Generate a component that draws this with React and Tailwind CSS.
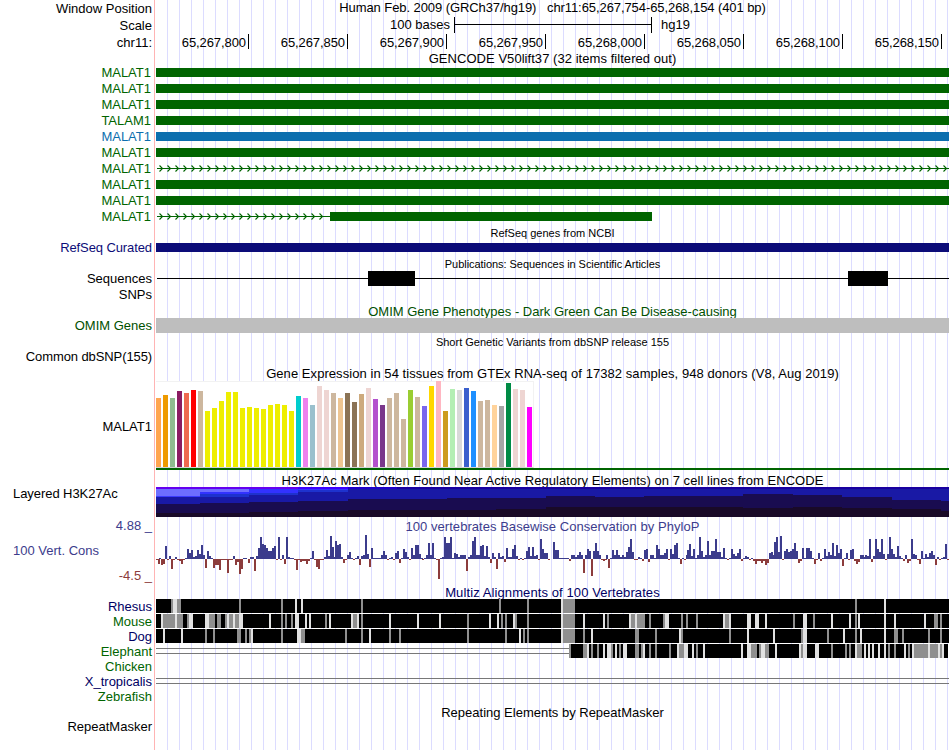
import React from 'react';
import clsx from 'clsx';

const GREEN = '#006400';

// bar height and colour for each of the 54 tissues
const tissues = [
  [69, '#ffa54f'], [72, '#ee9a00'], [69, '#8fbc8f'], [76, '#8b1c62'], [74, '#ee6a50'], [77, '#ff0000'],
  [76, '#cdb79e'], [56, '#eeee00'], [59, '#eeee00'], [66, '#eeee00'], [75, '#eeee00'], [75, '#eeee00'],
  [59, '#eeee00'], [60, '#eeee00'], [59, '#eeee00'], [58, '#eeee00'], [62, '#eeee00'], [63, '#eeee00'],
  [62, '#eeee00'], [56, '#eeee00'], [71, '#00cdcd'], [69, '#ee82ee'], [62, '#9ac0cd'], [81, '#eed5d2'],
  [77, '#eed5d2'], [74, '#cdb79e'], [69, '#eec591'], [74, '#8b7355'], [65, '#8b7355'], [73, '#cdaa7d'],
  [79, '#eed5d2'], [68, '#b452cd'], [62, '#7a378b'], [69, '#cdb79e'], [74, '#cdb79e'], [48, '#cdb79e'],
  [77, '#9acd32'], [70, '#cdb79e'], [61, '#7a67ee'], [81, '#ffd700'], [86, '#ffb6c1'], [56, '#cd9b1d'],
  [78, '#b4eeb4'], [77, '#d9d9d9'], [79, '#3a5fcd'], [76, '#1e90ff'], [66, '#cdb79e'], [67, '#cdb79e'],
  [62, '#ffd39b'], [61, '#a6a6a6'], [84, '#008b45'], [78, '#eed5d2'], [77, '#eed5d2'], [60, '#ff00ff'],
];

// runs of scores, two pixels per base, starting at x
const phyloP = [
  { x: 0, v: [-1] },
  { x: 2, v: [-5] },
  { x: 3, v: [1, -6, -5, 13, -1, 3, -10, -1, 2, -1, -2, -5, -1, 1, 10, 6, 9, 2, 3, 9, 5, 14, 4, -9, 8, 3, 1, -9, -6, -6, -11, -1, -1, -1, -14, -1, -1, 3, -6, -3, -15, -10, 1, 1] },
  { x: 92, v: [-4, 2, 2, -12, 3, 11, 22, 15, 14, 11, 8, 8, 11, 13, -1, 22, -1, 4, -5, 22, 2, 1, 1, -1, -11, -1, -3, -2, -2, -5, -2, 1, 8, -1, -8, -10, -1, -1, 2, 9, 3, 23, 12] },
  { x: 178, v: [2] },
  { x: 179, v: [18, 14, 15, 2, -4, -1, 4, 7] },
  { x: 195, v: [1, -1, 1, 3, -6, 3, 4, 24, 5, -8, 11, 1, 1, 1, 1, 4, 8, 4, -1, 1, 2, -1, 6, 8, -4, 1, 10, 7, 2, -1, 11, 4, 14, 14, 5, 1] },
  { x: 266, v: [-1, 1, 4, 16, 4, 16, 1, -1, -20, 1, 2, 22, 16, 16, 22, 1, 6, 5, 2, 4, 4, 4, -12, 2, 4, 18, 22, 4, 4, 13, 14, 3, 13, 2, -4, 6, 2, -10, 6, 2, 3, -3, 11, 2, 2, 10, 14, 3, -1, 1, -1, 1, 8, 12] },
  { x: 374, v: [3, 12, 3, 4, -1, 20, 10, 6, 6, -1] },
  { x: 397, v: [17, 9, 9, 1, 1, 1, 1, 1, -2, 4, 4, 2, 4, 7, 4, -14, 4, 10, 8, -17, 8, 16, 8] },
  { x: 443, v: [4, -1, -2] },
  { x: 449, v: [-1] },
  { x: 450, v: [4, -9, 1, 9, 4, 9, 4, 2, 4, 2, 7, 12, 20, 7, -1, -1, 2, 1, -2, 9, 10, -3, 4, 4, 1, 14, 10, 4, 4, 6, 10, -1, 10, 5, 14, 16, 1, -5, 1, -1, 4] },
  { x: 531, v: [9, 15, 3, 10, 1, 4, 22, 8, 2, 4, 18, 4, 8, 8, 20, 7, 7, 2, 11, 1, -1, 1, 10, 5, 3, 6, 10, -2, 1, 3, 2, -1, 1, -2, -5, -2, -2, -4, -2, -6, -4, 6] },
  { x: 615, v: [7] },
  { x: 616, v: [4] },
  { x: 618, v: [17, 22, 7, 23, -1, 8, 10, 7, 8, 10, 16, 8, -4, -2, 11, 1, 11, 11, 8, 1, -5, -1, 6, -2, 1, 10, 3, 7, 4, 16, 3, 14, 6, 10, -7, 1, 6, -1, 9, 10, -2, -5, -3, 4, 4] },
  { x: 708, v: [2] },
  { x: 709, v: [4, 3, 20, -3, 3, 20, 10, 7, 20, 5, -1, 5, 22, 10, 5, 2, 13, 3, 1, -2, 4, -4, -2, 20, 5, 4, -1, -5, 8, 1, 5, 2, 6, 8, 4, -6, 2, -1, 1, 2, 15, -1] },
];

// [x, last layer top, dark layer top] for each ChIP-seq window
const h3k27ac = [
  [0, 26, 17], [44, 26, 16], [93, 25, 15], [142, 24, 14], [192, 23, 12], [241, 23, 12], [291, 23, 11],
  [340, 22, 11], [390, 20, 9], [439, 20, 10], [488, 20, 9], [587, 21, 7], [637, 20, 8], [686, 21, 10],
  [736, 22, 13], [785, 24, 14], [793, 30, 30],
];

// x, y, width, height, fill
const h3k27acPeaks = [
  [0, 0, 192, 2, '#6400f0'],
  [142, 0, 50, 2, '#3c00ff'],
  [192, 0, 49, 2, '#1e00c8'],
  [241, 0, 552, 2, '#1900a0'],
  [0, 2, 44, 7, '#6e6eff'],
  [0, 9, 44, 1, '#3c3cff'],
  [44, 2, 49, 3, '#6e6eff'],
  [44, 5, 49, 2, '#3232ff'],
  [44, 7, 49, 3, '#1e32cd'],
  [93, 2, 49, 4, '#3232ff'],
  [93, 6, 49, 2, '#1e32cd'],
  [142, 2, 50, 1, '#3232ff'],
  [142, 3, 50, 2, '#1e32cd'],
];

// mismatching bases: g = grey, l = light, then x and optional width (default 2)
const species = [
  {
    name: 'Rhesus', color: 'text-[#000064]', start: 0,
    gaps: 'g15 l17:4 g21:4 g83 g125 l139 l145 g205 g343 g371 l405 g407:12 g699 l728',
  },
  {
    name: 'Mouse', color: 'text-[#006400]', start: 0,
    gaps: 'l5 g7:12 l19 g21:6 g31 l33:4 l49:4 g53:6 g61:4 g69 l71 g73:4 l77 g79:4 l83:4 l113 g125 g129 g135 l139:4 l149 l153 g169 l173 l195 g197:4 l201 g205 l233 l261 l283 g311 l333 l341 g345 g349 l357 g359 g371 l405 g407:12 l427 l447 g451 l473 g475:4 l479 g481:8 g493 g507 l509:4 g525 g530 g540 l567 g569:4 l573 l591:4 l599:4 l609 g637 l647:4 g657 l675 l693 g699 l702 l728 l738 l768 g778:4 g784',
  },
  {
    name: 'Dog', color: 'text-[#000064]', start: 0,
    gaps: 'l7 l25 g49 g57 g81:4 g89 g93 l95 g125 l141:4 g145:4 g189 g205 l213 g233 g243 g311 g349 l363 g367 g371 l405 g407:12 g427 l435 g479:4 g499 l523 g525 g573 l591 l617 g645 l647:4 g671 l687 g699 l704 l728 g738:4 g746 g772 g784',
  },
  {
    name: 'Elephant', color: 'text-[#006400]', start: 413,
    gaps: 'g413 g427:4 l431 g435 g441 l447 l451:4 g455 l459 g463 l467 l469 g479:4 g485 l487 g493 g499 g513 l521 g523:5 l528:4 l536 g540 l547 l585 l591:4 g595:6 g603 l605:4 g609:4 l619 l643 g645 l647:4 l659:4 g675 g689 g693 l699 g701:5 l708 l712 l716 l722 l728 g732 g738 l748 g752 l756 g758:14 l772 g774:8 l782 g784 l786',
  },
  { name: 'Chicken', color: 'text-[#006400]' },
  { name: 'X_tropicalis', color: 'text-[#000064]', start: 793 },
  { name: 'Zebrafish', color: 'text-[#006400]' },
];

const genes = [
  { name: 'MALAT1' },
  { name: 'MALAT1' },
  { name: 'MALAT1' },
  { name: 'TALAM1' },
  { name: 'MALAT1', coding: true },
  { name: 'MALAT1' },
  { name: 'MALAT1', intron: 793 },
  { name: 'MALAT1' },
  { name: 'MALAT1' },
  { name: 'MALAT1', intron: 174, exon: 322 },
];

const ticks = ['65,267,800', '65,267,850', '65,267,900', '65,267,950', '65,268,000', '65,268,050', '65,268,100', '65,268,150'];

const Row = ({ label, labelClass, className, children }) => (
  <div className={clsx('flex', className)}>
    <div className={clsx('w-[154px] shrink-0 pr-[2px] text-right', labelClass)}>{label}</div>
    <div className="shrink-0 border-l border-[#ffb4b4] pl-px">
      <div className="h-full w-[793px] bg-[linear-gradient(to_right,transparent_11px,#dcdcff_11px)] bg-[length:12px_100%]">
        {children}
      </div>
    </div>
  </div>
);

const Title = ({ small, className, height = 'h-[15px]', children }) => (
  <Row className={height}>
    <div className={clsx('text-center', small && 'pt-px text-[11px]', className)}>{children}</div>
  </Row>
);

const Chart = ({ width = 793, height, children }) => (
  <svg className="block" width={width} height={height} shapeRendering="crispEdges">
    {children}
  </svg>
);

const Intron = ({ width }) => {
  const arrows = [];
  for (let x = 3; x + 4 <= width; x += 8) {
    arrows.push(`M${x} .5l3 3l-3 3`);
  }
  return (
    <svg className="-my-px block" width={width} height="11" viewBox={`0 -1 ${width} 11`}>
      <path d={`M1 3.5H${width}`} stroke={GREEN} shapeRendering="crispEdges" />
      <path d={arrows.join('')} transform="translate(.5 0)" stroke={GREEN} strokeWidth="1.1" fill="none" />
    </svg>
  );
};

const Gene = ({ name, coding, intron, exon }) => (
  <Row label={name} className="h-4" labelClass={clsx('pr-[3px]!', coding ? 'text-[#0c6eae]' : 'text-[#006400]')}>
    <div className="flex pt-[3px]">
      {intron && <div className="h-[9px] pt-px"><Intron width={intron} /></div>}
      {(!intron || exon) && (
        <div className={clsx('h-[9px]', coding ? 'bg-[#0c6eae]' : 'bg-[#006400]', exon ? 'w-[322px]' : 'w-full')} />
      )}
    </div>
  </Row>
);

const Alignment = ({ name, color, start, gaps }) => (
  <Row label={name} labelClass={color} className="h-[15px]">
    {start !== undefined && (
      <Chart height={15}>
        {start > 0 && <path d={`M0 4.5H${start}M0 9.5H${start}`} stroke="#787878" />}
        {gaps && <rect x={start} width={792 - start + (start ? 0 : 1)} height="14" />}
        {gaps && gaps.split(' ').map((gap) => {
          const [x, width = 2] = gap.slice(1).split(':');
          return <rect key={gap} x={x} width={width} height="14" fill={gap[0] === 'g' ? '#8f8f8f' : '#e1e1e1'} />;
        })}
      </Chart>
    )}
  </Row>
);

const App = () => (
  <div className="h-[750px] w-[950px] overflow-hidden bg-white font-['Liberation_Sans',Arial,sans-serif] text-[13px] leading-[15px] whitespace-pre text-black">
    <Row label="Window Position" labelClass="pt-px" className="h-[17px]">
      <div className="text-center tracking-[-0.08px]">Human Feb. 2009 (GRCh37/hg19)   chr11:65,267,754-65,268,154 (401 bp)</div>
    </Row>
    <Row label="Scale" labelClass="pt-px" className="h-[17px]">
      <div className="flex">
        <div className="w-[294px] text-right">100 bases</div>
        <div className="ml-1 flex h-4 w-[198px] border-x border-black">
          <div className="mt-[7px] h-px w-full bg-black" />
        </div>
        <div className="ml-[9px]">hg19</div>
      </div>
    </Row>
    <Row label="chr11:" labelClass="pt-px" className="h-4">
      <div className="flex tracking-[-0.08px]">
        {ticks.map((tick, i) => (
          <div key={tick} className={clsx('h-[15px] border-r border-black pt-px pr-[2px] text-right', i === 0 ? 'w-[93px]' : 'w-[99px]')}>
            {tick}
          </div>
        ))}
      </div>
    </Row>
    <Title className="pt-px tracking-[0.05px]">GENCODE V50lift37 (32 items filtered out)</Title>

    {genes.map((gene, i) => <Gene key={i} {...gene} />)}

    <Title small>RefSeq genes from NCBI</Title>
    <Row label="RefSeq Curated" labelClass="tracking-[-0.1px] text-[#0c0c78]" className="h-4">
      <div className="pt-[3px]"><div className="h-[9px] bg-[#0c0c78]" /></div>
    </Row>

    <Title small className="tracking-[-0.05px]">Publications: Sequences in Scientific Articles</Title>
    <Row label="Sequences" className="h-4">
      <div className="flex h-[15px] items-center">
        <div className="ml-px h-px w-[211px] bg-black" />
        <div className="h-[15px] w-[47px] bg-black" />
        <div className="h-px w-[433px] bg-black" />
        <div className="h-[15px] w-10 bg-black" />
        <div className="h-px w-[61px] bg-black" />
      </div>
    </Row>
    <Row label="SNPs" className="h-4" />

    <Title className="h-[15px] overflow-hidden pt-px text-[#005000]">OMIM Gene Phenotypes - Dark Green Can Be Disease-causing</Title>
    <Row label="OMIM Genes" labelClass="text-[#005000]" className="h-4">
      <div className="h-[15px] bg-[#bebebe]" />
    </Row>

    <Title small>Short Genetic Variants from dbSNP release 155</Title>
    <Row label="Common dbSNP(155)" labelClass="tracking-[-0.1px]" className="h-4" />

    <Title className="pt-px tracking-[0.06px]">Gene Expression in 54 tissues from GTEx RNA-seq of 17382 samples, 948 donors (V8, Aug 2019)</Title>
    <Row label="MALAT1" labelClass="pt-[39px]" className="h-[92px]">
      <div className="pt-px">
        <div className="flex h-[87px] w-[378px] items-end gap-[2px] border-t border-r border-b border-t-[#f2f2f2] border-r-[#f2f2f2] border-b-[#d2d2d2] bg-white">
          {tissues.map(([height, color], i) => (
            <div key={i} className="w-[5px] shrink-0" style={{ height, backgroundColor: color }} />
          ))}
        </div>
        <div className="h-[2px] bg-[#006400]" />
      </div>
    </Row>

    <Title className="pt-px tracking-[0.05px]">H3K27Ac Mark (Often Found Near Active Regulatory Elements) on 7 cell lines from ENCODE</Title>
    <Row
      label={<div className="-mt-px pl-[13px] text-left tracking-[-0.06px]">Layered H3K27Ac</div>}
      className="h-[30px]"
    >
      <Chart height={30}>
        <rect width="793" height="30" fill="#1919a5" />
        {h3k27ac.slice(0, -1).map(([x, bottom, dark], i) => (
          <g key={x}>
            <rect x={x} y={dark} width={h3k27ac[i + 1][0] - x} height={bottom - dark} fill="#190c50" />
            <rect x={x} y={bottom} width={h3k27ac[i + 1][0] - x} height={30 - bottom} fill="#190a28" />
          </g>
        ))}
        {h3k27acPeaks.map(([x, y, width, height, fill], i) => (
          <rect key={i} x={x} y={y} width={width} height={height} fill={fill} />
        ))}
      </Chart>
    </Row>

    <Row
      className="h-[68px]"
      labelClass="flex flex-col pt-px text-[#3c3c8c]"
      label={
        <>
          <span>4.88 _</span>
          <span className="mt-[10px] pl-[13px] text-left">100 Vert. Cons</span>
          <span className="mt-[10px] text-[#8c3c3c]">-4.5 _</span>
        </>
      }
    >
      <div className="h-[17px] pt-[2px] text-center tracking-[0.04px] text-[#3c3c8c]">100 vertebrates Basewise Conservation by PhyloP</div>
      <Chart height={51}>
        {phyloP.map(({ x, v }) => v.map((score, i) => (
          <rect
            key={x + i * 2}
            x={x + i * 2}
            y={score > 0 ? 25 - score : 25}
            width="2"
            height={Math.abs(score)}
            fill={score > 0 ? '#3c3c8c' : '#8c3c3c'}
          />
        )))}
      </Chart>
    </Row>

    <Title height="h-[14px]" className="tracking-[0.1px] text-[#000064]">Multiz Alignments of 100 Vertebrates</Title>
    {species.map((s) => <Alignment key={s.name} {...s} />)}

    <Title className="pt-px">Repeating Elements by RepeatMasker</Title>
    <Row label="RepeatMasker" className="h-[31px]" />
  </div>
);

export default App;
